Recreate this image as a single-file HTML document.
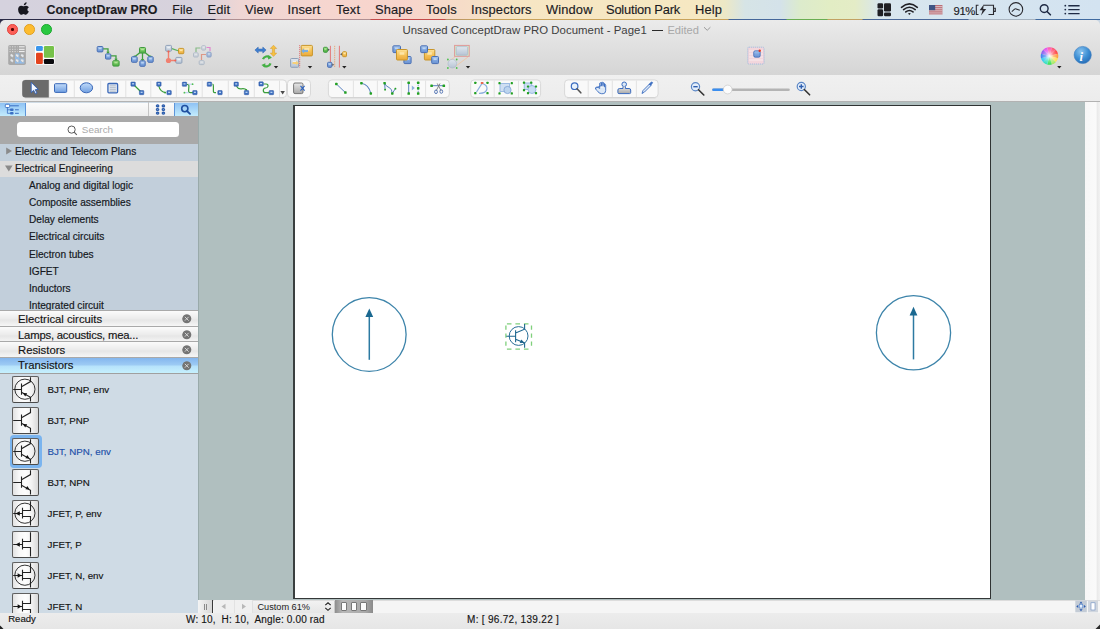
<!DOCTYPE html>
<html><head><meta charset="utf-8">
<style>
*{box-sizing:border-box;margin:0;padding:0}
html,body{width:1100px;height:629px;overflow:hidden;background:#ececec;font-family:"Liberation Sans",sans-serif;color:#1e1e1e}
.a{position:absolute}
.t{position:absolute;white-space:nowrap;line-height:1}
#menubar{left:0;top:0;width:1100px;height:19px;background:linear-gradient(to right,#d5d2de 0px,#d7d2dc 200px,#efd6d4 240px,#f6d6cf 330px,#f8d4cc 400px,#f6dcc8 460px,#f6e6c4 520px,#f6e8c2 700px,#ece8c6 725px,#d6e4e6 745px,#d4e2ea 780px,#dcebcc 800px,#e2edc4 830px,#e4ecc6 855px,#d8e6ee 880px,#d3e3f1 1100px)}
#menuline{left:0;top:19px;width:1100px;height:1px;background:linear-gradient(to right,#2a2a46 0,#2a2a46 215px,#b08f92 216px,#b08f92 370px,#c44a4a 371px,#c44a4a 445px,#b69068 446px,#c9a35a 480px,#c9a35a 728px,#45679a 729px,#45679a 786px,#6aae52 787px,#6aae52 827px,#c2a262 828px,#c2a262 862px,#4a6898 863px,#4a6898 968px,#a8b4c0 969px,#a8b4c0 1035px,#3f6aa0 1036px)}
.mi{position:absolute;top:2.6px;font-size:12.9px;line-height:14px;color:#1b1b1f;letter-spacing:0.12px;-webkit-text-stroke:0.15px #1b1b1f}
#win{left:0;top:20px;width:1100px;height:55px;background:linear-gradient(#ebebeb,#e4e4e4 30%,#d5d5d5);border-radius:5px 5px 0 0}
#tb2{left:0;top:75px;width:1100px;height:26px;background:linear-gradient(#f0f0f0,#ececec)}
#tb2line{left:0;top:101px;width:1100px;height:1.6px;background:#b2b2b2}
#panel{left:0;top:102px;width:198px;height:511px;background:#cfdbe5}
#canvas{left:198px;top:102px;width:887px;height:498px;background:#b0bfbf;border-left:1px solid #9aa}
#page{left:293px;top:105px;width:698px;height:493.6px;background:#fff;border:1.5px solid #2f3333;border-left:2px solid #3a3f3f;border-bottom:1.8px solid #343838}
#vscroll{left:1085px;top:102px;width:15px;height:498px;background:linear-gradient(to right,#f7f7f7,#fafafa 75%,#e9e9e9 80%,#f2f2f2)}
#hbar{left:198px;top:600px;width:902px;height:13px;background:#f5f5f5;border-top:1px solid #dcdcdc}
#status{left:0;top:613px;width:1100px;height:16px;background:linear-gradient(#ececec,#e6e6e6)}
.st{position:absolute;top:616px;font-size:9.4px;line-height:10px;color:#151515;-webkit-text-stroke:0.15px #151515}
.tree{position:absolute;font-size:10.12px;line-height:11px;color:#15181d;-webkit-text-stroke:0.18px #15181d}
.hdr{position:absolute;left:0;width:198px;height:16px;border-top:1px solid #a9a9a9;background:linear-gradient(#fbfbfb,#ececec 50%,#e6e6e6 60%,#f6f6f6)}
.hdr span{position:absolute;left:18px;top:1.6px;font-size:11.3px;line-height:12px;color:#141414;-webkit-text-stroke:0.15px #141414}
.xb{position:absolute;left:182px;top:3px;width:9.5px;height:9.5px;border-radius:50%;background:#767676}
.item{position:absolute;left:11.6px;width:27.2px;height:26.8px;border:1.2px solid #606060;border-bottom:1.8px solid #4a4a4a;border-right:1.5px solid #555;border-radius:2px;background:linear-gradient(to right,#e2e2e2,#f8f8f8 25%,#fdfdfd 50%,#f2f2f2 75%,#d8d8d8)}
.il{position:absolute;left:47.6px;font-size:9.75px;line-height:10px;color:#111;-webkit-text-stroke:0.15px currentColor}
</style></head><body>
<div class="a" id="menubar"></div>
<div class="a" id="menuline"></div>
<div class="mi" style="left:46.5px;font-weight:bold;font-size:12.4px;letter-spacing:0.05px;top:3px">ConceptDraw PRO</div>
<div class="mi" style="left:172.3px;font-size:12.4px">File</div>
<div class="mi" style="left:207.5px">Edit</div>
<div class="mi" style="left:245px">View</div>
<div class="mi" style="left:287.5px">Insert</div>
<div class="mi" style="left:336px">Text</div>
<div class="mi" style="left:375px">Shape</div>
<div class="mi" style="left:426px">Tools</div>
<div class="mi" style="left:471px">Inspectors</div>
<div class="mi" style="left:546px">Window</div>
<div class="mi" style="left:606px;letter-spacing:-0.2px">Solution Park</div>
<div class="mi" style="left:695px">Help</div>
<div class="mi" style="left:953.5px;font-size:11.3px;letter-spacing:-0.4px;top:3.5px">91%</div>

<div class="a" style="left:0;top:19px;width:6px;height:6px;background:#2a2a46"></div><div class="a" style="left:1094px;top:20px;width:6px;height:6px;background:#c8d6e4"></div><div class="a" id="win"></div>
<div class="a" id="tb2"></div>
<div class="a" id="tb2line"></div>

<!-- apple + traffic lights -->
<svg class="a" style="left:17.3px;top:0.9px" width="14" height="15" viewBox="0 0 14 15"><path d="M9.6 1.2Q9.7 2.6 8.8 3.5 7.9 4.4 6.8 4.3 6.7 3.1 7.6 2.2 8.5 1.3 9.6 1.2zM11.9 10.2Q11.4 11.5 10.6 12.6 9.8 13.7 8.9 13.7 8.3 13.7 7.7 13.4 7.1 13.1 6.5 13.1 5.9 13.1 5.3 13.4 4.7 13.7 4.2 13.7 3.3 13.7 2.4 12.4 1.1 10.5 1.1 8.4 1.1 6.7 2 5.7 2.9 4.7 4.2 4.7 4.8 4.7 5.5 5 6.1 5.3 6.6 5.3 7 5.3 7.7 5 8.5 4.7 9.1 4.7 10.9 4.7 11.9 6.2 10.4 7.1 10.4 8.4 10.4 9.6 11.2 10.3z" fill="#17171f"/></svg>
<div class="a" style="left:7.2px;top:24.3px;width:10.4px;height:10.4px;border-radius:50%;background:#fd5f57;border:0.6px solid #e2463f"></div>
<div class="a" style="left:11.1px;top:28.2px;width:2.6px;height:2.6px;border-radius:50%;background:#4d0000"></div>
<div class="a" style="left:24.3px;top:24.3px;width:10.4px;height:10.4px;border-radius:50%;background:#fdbc2e;border:0.6px solid #e0a023"></div>
<div class="a" style="left:41.3px;top:24.3px;width:10.4px;height:10.4px;border-radius:50%;background:#29c840;border:0.6px solid #1eaa30"></div>
<!-- right menu icons -->
<svg class="a" style="left:870px;top:0" width="230" height="19" viewBox="870 0 230 19">
<rect x="877.5" y="3.2" width="5.6" height="5.2" rx="1.2" fill="#1f1f24"/><rect x="877.5" y="9.3" width="5.6" height="7" rx="1.2" fill="#1f1f24"/><rect x="884" y="3.2" width="7" height="8.3" rx="1.2" fill="#1f1f24"/><rect x="884" y="12.4" width="7" height="3.9" rx="1.2" fill="#1f1f24"/>
<path d="M901.5 7.3Q909.4 0.6 917.3 7.3M903.6 9.6Q909.4 4.9 915.2 9.6M905.8 11.9Q909.4 9.2 913 11.9" fill="none" stroke="#1f1f24" stroke-width="1.6" stroke-linecap="round"/><path d="M908 13.6L909.4 15 910.8 13.6Q909.4 12.6 908 13.6z" fill="#1f1f24"/>
<rect x="929" y="5" width="13.4" height="9.6" fill="#b8636b"/><path d="M929 6.4h13.4M929 8.3h13.4M929 10.2h13.4M929 12.1h13.4M929 14h13.4" stroke="#e8e4e8" stroke-width="0.75"/><rect x="929" y="5" width="6.2" height="5.2" fill="#3f5484"/>
<path d="M978.5 5.2H976.3V14.5H978.5M983.5 5.2H993.5V14.5H988.5M993.5 8.3H995.3V11.4H993.5" fill="none" stroke="#2a2a30" stroke-width="1.1"/><path d="M983.8 4.6L979.6 10.3H982.6L981 15.4 986.2 9H983.2z" fill="#2a2a30"/>
<circle cx="1015.9" cy="9.4" r="6.8" fill="none" stroke="#2a2a30" stroke-width="1.1"/><path d="M1011.8 11.6L1014.6 9.2Q1015.3 8.6 1016.2 8.9L1019.8 10.2" fill="none" stroke="#2a2a30" stroke-width="1.1"/>
<circle cx="1044.2" cy="8.6" r="3.9" fill="none" stroke="#1f2a44" stroke-width="1.4"/><path d="M1047 11.5L1050.4 14.8" stroke="#1f2a44" stroke-width="1.6" stroke-linecap="round"/>
<path d="M1068.3 5.7H1079.6M1068.3 9.6H1079.6M1068.3 13.6H1079.6" stroke="#1f2a44" stroke-width="1.4"/><circle cx="1065.3" cy="5.7" r="0.9" fill="#1f2a44"/><circle cx="1065.3" cy="9.6" r="0.9" fill="#1f2a44"/><circle cx="1065.3" cy="13.6" r="0.9" fill="#1f2a44"/>
</svg>
<!--TB1--><svg class="a" style="left:0;top:0" width="1100" height="102" viewBox="0 0 1100 102"><defs>
<linearGradient id="gb" x1="0" y1="0" x2="0" y2="1"><stop offset="0" stop-color="#a9c9f0"/><stop offset="0.5" stop-color="#7ea6e0"/><stop offset="1" stop-color="#6b93d2"/></linearGradient>
<linearGradient id="gg" x1="0" y1="0" x2="0" y2="1"><stop offset="0" stop-color="#a6e28a"/><stop offset="0.5" stop-color="#6cc35a"/><stop offset="1" stop-color="#4eae44"/></linearGradient>
<linearGradient id="gy" x1="0" y1="0" x2="0" y2="1"><stop offset="0" stop-color="#fde29a"/><stop offset="0.5" stop-color="#f6c45a"/><stop offset="1" stop-color="#eaa83a"/></linearGradient>
<linearGradient id="ggr" x1="0" y1="0" x2="0" y2="1"><stop offset="0" stop-color="#dfe6ee"/><stop offset="1" stop-color="#b7c4d4"/></linearGradient>
<radialGradient id="gi" cx="0.4" cy="0.3" r="0.7"><stop offset="0" stop-color="#8cc4ee"/><stop offset="0.6" stop-color="#3d8fd4"/><stop offset="1" stop-color="#2a6fb8"/></radialGradient>
</defs><defs><radialGradient id="gw"><stop offset="0" stop-color="#fff" stop-opacity="0.95"/><stop offset="0.5" stop-color="#fff" stop-opacity="0.35"/><stop offset="1" stop-color="#fff" stop-opacity="0"/></radialGradient></defs><rect x="8.2" y="45" width="17.7" height="20" rx="1.8" fill="#a9a9a9"/><path d="M9.5 46.8h8" stroke="#e8e8e8" stroke-width="0.8" stroke-dasharray="1.2 1.3"/><path d="M19 46.8h5.6" stroke="#f4f4f4" stroke-width="1"/><path d="M9.5 49.3h8" stroke="#e8e8e8" stroke-width="0.8" stroke-dasharray="1.2 1.3"/><path d="M19 49.3h5.6" stroke="#f4f4f4" stroke-width="1"/><path d="M9.5 51.6h8" stroke="#e8e8e8" stroke-width="0.8" stroke-dasharray="1.2 1.3"/><path d="M19 51.6h5.6" stroke="#f4f4f4" stroke-width="1"/><rect x="15.1" y="53.5" width="4.2" height="10" fill="#8fbef0"/><rect x="19.3" y="58.5" width="5" height="5" fill="#8fbef0"/><ellipse cx="11.8" cy="55.6" rx="2" ry="1.4" fill="#e4e8ec" stroke="#9a9a9a" stroke-width="0.4" transform="rotate(45 11.8 55.6)"/><ellipse cx="11.8" cy="60.6" rx="2" ry="1.4" fill="#e4e8ec" stroke="#9a9a9a" stroke-width="0.4" transform="rotate(45 11.8 60.6)"/><ellipse cx="17.2" cy="55.6" rx="2" ry="1.4" fill="#e4e8ec" stroke="#9a9a9a" stroke-width="0.4" transform="rotate(45 17.2 55.6)"/><ellipse cx="17.2" cy="60.6" rx="2" ry="1.4" fill="#e4e8ec" stroke="#9a9a9a" stroke-width="0.4" transform="rotate(45 17.2 60.6)"/><ellipse cx="22.3" cy="55.6" rx="2" ry="1.4" fill="#e4e8ec" stroke="#9a9a9a" stroke-width="0.4" transform="rotate(45 22.3 55.6)"/><ellipse cx="22.3" cy="60.6" rx="2" ry="1.4" fill="#e4e8ec" stroke="#9a9a9a" stroke-width="0.4" transform="rotate(45 22.3 60.6)"/><rect x="35" y="45.2" width="19.6" height="19.6" rx="2.5" fill="#fff"/><rect x="36" y="46" width="6.8" height="4.9" rx="1.2" fill="#3a96ec"/><rect x="36" y="52.8" width="6.8" height="11.2" rx="1.2" fill="#e4441e"/><rect x="43.9" y="46" width="10.1" height="11.7" rx="1.2" fill="#76c24a"/><rect x="43.9" y="59.1" width="10.1" height="4.9" rx="1.2" fill="#0b0b0e"/><path d="M103 48.8H108V52.5M111 55.8H116V59.5" fill="none" stroke="#3f9e3f" stroke-width="1.3"/><path d="M106.2 51.8h3.6L108 54z M114.2 58.8h3.6L116 61z" fill="#3f9e3f"/><g opacity="1"><rect x="97.20" y="46.50" width="5.70" height="5.40" rx="0.9" fill="url(#gb)" stroke="#4a70b4" stroke-width="1"/><rect x="98.71" y="47.79" width="2.68" height="1.41" fill="#d4e6fa" opacity="0.7"/></g><g opacity="1"><rect x="105.50" y="53.90" width="5.30" height="5.20" rx="0.9" fill="url(#gb)" stroke="#4a70b4" stroke-width="1"/><rect x="106.89" y="55.14" width="2.52" height="1.36" fill="#d4e6fa" opacity="0.7"/></g><g opacity="1"><rect x="112.80" y="60.70" width="6.30" height="5.40" rx="0.9" fill="url(#gg)" stroke="#3f9a3f" stroke-width="1"/><rect x="114.49" y="61.99" width="2.92" height="1.41" fill="#c8f0b0" opacity="0.7"/></g><path d="M142.5 53V60M140 52.5L134.5 57M145 52.5L150.5 57" fill="none" stroke="#3f9e3f" stroke-width="1.3"/><path d="M140.7 59h3.6l-1.8 2.2z" fill="#3f9e3f"/><circle cx="134.6" cy="56.6" r="1.2" fill="#3f9e3f"/><circle cx="150.4" cy="56.6" r="1.2" fill="#3f9e3f"/><g opacity="1"><rect x="139.50" y="47.50" width="6.00" height="5.60" rx="0.9" fill="url(#gg)" stroke="#3f9a3f" stroke-width="1"/><rect x="141.10" y="48.85" width="2.80" height="1.45" fill="#c8f0b0" opacity="0.7"/></g><g opacity="1"><rect x="131.50" y="56.70" width="5.70" height="5.60" rx="0.9" fill="url(#gb)" stroke="#4a70b4" stroke-width="1"/><rect x="133.01" y="58.05" width="2.68" height="1.45" fill="#d4e6fa" opacity="0.7"/></g><g opacity="1"><rect x="139.80" y="60.80" width="5.40" height="5.50" rx="0.9" fill="url(#gb)" stroke="#4a70b4" stroke-width="1"/><rect x="141.22" y="62.12" width="2.56" height="1.43" fill="#d4e6fa" opacity="0.7"/></g><g opacity="1"><rect x="147.80" y="56.70" width="5.40" height="5.60" rx="0.9" fill="url(#gb)" stroke="#4a70b4" stroke-width="1"/><rect x="149.22" y="58.05" width="2.56" height="1.45" fill="#d4e6fa" opacity="0.7"/></g><path d="M172 48.6L178 50.8" stroke="#5bb05b" stroke-width="1.2"/><path d="M168.5 51.5V59M168.5 60.5H175.5" stroke="#f08070" stroke-width="1.4" fill="none"/><g opacity="1"><rect x="165.70" y="45.40" width="5.80" height="5.80" rx="0.9" fill="url(#ggr)" stroke="#8ea0b8" stroke-width="1"/><rect x="167.24" y="46.80" width="2.72" height="1.50" fill="#f4f7fa" opacity="0.7"/></g><g opacity="1"><rect x="178.50" y="48.40" width="5.30" height="5.30" rx="0.9" fill="url(#gy)" stroke="#c8952a" stroke-width="1"/><rect x="179.89" y="49.66" width="2.52" height="1.39" fill="#fff0c0" opacity="0.7"/></g><g opacity="1"><rect x="175.80" y="57.40" width="6.10" height="5.80" rx="0.9" fill="url(#ggr)" stroke="#8ea0b8" stroke-width="1"/><rect x="177.43" y="58.80" width="2.84" height="1.50" fill="#f4f7fa" opacity="0.7"/></g><circle cx="168.5" cy="60.5" r="2.6" fill="#f08070"/><circle cx="168.5" cy="51.6" r="1.1" fill="#f06050"/><circle cx="175.3" cy="60.5" r="1" fill="#f06050"/><g opacity="0.55"><path d="M196 52V48H200.5" stroke="#3f9e3f" stroke-width="1.2" fill="none"/><path d="M206.5 47.5H210V51" stroke="#e040c0" stroke-width="1.2" fill="none"/><path d="M206 54.5H201.5V60" stroke="#e06040" stroke-width="1.2" fill="none"/><g opacity="1"><rect x="201.70" y="45.70" width="3.90" height="4.40" rx="0.9" fill="url(#ggr)" stroke="#8ea0b8" stroke-width="1"/><rect x="202.67" y="46.71" width="1.96" height="1.19" fill="#f4f7fa" opacity="0.7"/></g><g opacity="1"><rect x="193.50" y="52.80" width="4.70" height="4.20" rx="0.9" fill="url(#ggr)" stroke="#8ea0b8" stroke-width="1"/><rect x="194.71" y="53.76" width="2.28" height="1.14" fill="#f4f7fa" opacity="0.7"/></g><g opacity="1"><rect x="206.90" y="52.20" width="4.20" height="4.80" rx="0.9" fill="url(#gb)" stroke="#4a70b4" stroke-width="1"/><rect x="207.96" y="53.32" width="2.08" height="1.28" fill="#d4e6fa" opacity="0.7"/></g><g opacity="1"><rect x="199.20" y="60.70" width="5.00" height="3.90" rx="0.9" fill="url(#ggr)" stroke="#8ea0b8" stroke-width="1"/><rect x="200.50" y="61.57" width="2.40" height="1.08" fill="#f4f7fa" opacity="0.7"/></g></g><path d="M254.9 50.1L258.2 47.1V49H262.8V47.1L266.1 50.1 262.8 53.1V51.2H258.2V53.1z" fill="#3f7fcf" stroke="#2d63b0" stroke-width="0.5"/><path d="M273.5 45.2L276.7 48.5H274.6V53.1H276.7L273.5 56.4 270.3 53.1H272.4V48.5H270.3z" fill="#f6c142" stroke="#d4982a" stroke-width="0.5"/><path d="M263 59.2A4.3 4.3 0 0 1 270 57.5M270.5 63.4A4.3 4.3 0 0 1 263.4 65.2" fill="none" stroke="#44b044" stroke-width="2.2"/><path d="M268.3 55.3L272 57.8 268 59.4z M265.2 67.5L261.4 65 265.4 63.3z" fill="#44b044"/><path d="M273.8 66.1H278.2L276 68.6z" fill="#222"/><g opacity="1"><rect x="301.20" y="45.40" width="11.20" height="10.50" rx="0.9" fill="url(#gy)" stroke="#c8952a" stroke-width="1"/><rect x="304.36" y="48.12" width="4.88" height="2.53" fill="#fff0c0" opacity="0.7"/></g><path d="M302 51H308" stroke="#7aaee0" stroke-width="2.2"/><path d="M301.2 51L304 48.6V53.4z" fill="#7aaee0"/><g opacity="1"><rect x="290.60" y="58.50" width="8.00" height="8.80" rx="0.9" fill="url(#ggr)" stroke="#8ea0b8" stroke-width="1"/><rect x="292.80" y="60.74" width="3.60" height="2.16" fill="#f4f7fa" opacity="0.7"/></g><path d="M292.5 63H297" stroke="#f6d07a" stroke-width="2"/><path d="M299 63L296.2 60.8V65.2z" fill="#f6d07a"/><path d="M299.7 45V67.5" stroke="#e06a6a" stroke-width="0.9" stroke-dasharray="1.2 0.8"/><path d="M307.8 66.1H312.2L310 68.6z" fill="#222"/><path d="M330.4 45.8V67.6M339.4 45.8V67.6" stroke="#e47878" stroke-width="1"/><path d="M334.7 45.8V67.6" stroke="#e8a878" stroke-width="1" stroke-dasharray="1.4 0.8"/><g opacity="1"><rect x="323.50" y="47.30" width="3.90" height="5.00" rx="0.9" fill="url(#gg)" stroke="#3f9a3f" stroke-width="1"/><rect x="324.47" y="48.48" width="1.96" height="1.32" fill="#c8f0b0" opacity="0.7"/></g><g opacity="1"><rect x="327.60" y="62.30" width="4.20" height="5.00" rx="0.9" fill="url(#gb)" stroke="#4a70b4" stroke-width="1"/><rect x="328.66" y="63.48" width="2.08" height="1.32" fill="#d4e6fa" opacity="0.7"/></g><g opacity="1"><rect x="342.60" y="51.70" width="3.90" height="5.00" rx="0.9" fill="url(#gy)" stroke="#c8952a" stroke-width="1"/><rect x="343.57" y="52.88" width="1.96" height="1.32" fill="#fff0c0" opacity="0.7"/></g><path d="M328 48.5l1.8 1.3-1.8 1.3z M332.3 63.5l1.8 1.3-1.8 1.3z M341.9 52.9l-1.8 1.3 1.8 1.3z" fill="#555"/><path d="M342.1 66.1H346.5L344.3 68.6z" fill="#222"/><g opacity="1"><rect x="392.90" y="45.80" width="7.60" height="6.80" rx="0.9" fill="url(#gb)" stroke="#4a70b4" stroke-width="1"/><rect x="394.98" y="47.48" width="3.44" height="1.72" fill="#d4e6fa" opacity="0.7"/></g><g opacity="1"><rect x="403.90" y="56.50" width="7.20" height="7.10" rx="0.9" fill="url(#gb)" stroke="#4a70b4" stroke-width="1"/><rect x="405.86" y="58.27" width="3.28" height="1.78" fill="#d4e6fa" opacity="0.7"/></g><g opacity="1"><rect x="396.50" y="49.50" width="10.90" height="10.50" rx="0.9" fill="url(#gy)" stroke="#c8952a" stroke-width="1"/><rect x="399.57" y="52.22" width="4.76" height="2.53" fill="#fff0c0" opacity="0.7"/></g><g opacity="1"><rect x="424.40" y="49.50" width="10.40" height="10.50" rx="0.9" fill="url(#gy)" stroke="#c8952a" stroke-width="1"/><rect x="427.32" y="52.22" width="4.56" height="2.53" fill="#fff0c0" opacity="0.7"/></g><g opacity="1"><rect x="420.70" y="45.80" width="6.80" height="6.80" rx="0.9" fill="url(#gb)" stroke="#4a70b4" stroke-width="1"/><rect x="422.54" y="47.48" width="3.12" height="1.72" fill="#d4e6fa" opacity="0.7"/></g><g opacity="1"><rect x="431.70" y="56.50" width="6.80" height="7.10" rx="0.9" fill="url(#gb)" stroke="#4a70b4" stroke-width="1"/><rect x="433.54" y="58.27" width="3.12" height="1.78" fill="#d4e6fa" opacity="0.7"/></g><path d="M455 57L449 61M468 57L456 66" stroke="#f2c6a0" stroke-width="1" opacity="0.8"/><rect x="454.6" y="45.4" width="14.6" height="10.9" fill="#cfe8c8" stroke="#e09898" stroke-width="1"/><rect x="456.3" y="46.6" width="11.2" height="8.6" rx="1" fill="url(#ggr)" stroke="#a4b6cc" stroke-width="0.6"/><circle cx="452.3" cy="63.7" r="4.3" fill="url(#ggr)" stroke="#a8b6c8" stroke-width="0.6"/><circle cx="447.9" cy="59.5" r="0.9" fill="#4cc04c"/><circle cx="456.7" cy="59.5" r="0.9" fill="#4cc04c"/><circle cx="447.9" cy="68" r="0.9" fill="#4cc04c"/><circle cx="456.7" cy="68" r="0.9" fill="#4cc04c"/><path d="M465.8 66.1H470.2L468 68.6z" fill="#222"/><rect x="747.8" y="47.2" width="16.2" height="16.8" rx="1" fill="#f2d6dc" stroke="#8fb2e0" stroke-width="0.9" stroke-dasharray="1 1"/><path d="M749 51h14M749 54h14M749 57h14M749 60h14" stroke="#fff" stroke-width="0.8" opacity="0.7"/><rect x="753.7" y="50.8" width="6.5" height="6.4" rx="1.5" fill="url(#gb)" stroke="#3460b0" stroke-width="0.7"/><circle cx="759.7" cy="50.7" r="1.2" fill="#e8341c"/><path d="M1049.5 56L1055.72 49.78A8.8 8.8 0 0 1 1058.00 53.72z" fill="#ff4040"/><path d="M1049.5 56L1058.00 53.72A8.8 8.8 0 0 1 1058.00 58.28z" fill="#ff9a3a"/><path d="M1049.5 56L1058.00 58.28A8.8 8.8 0 0 1 1055.72 62.22z" fill="#ffe050"/><path d="M1049.5 56L1055.72 62.22A8.8 8.8 0 0 1 1051.78 64.50z" fill="#a8e860"/><path d="M1049.5 56L1051.78 64.50A8.8 8.8 0 0 1 1047.22 64.50z" fill="#30e050"/><path d="M1049.5 56L1047.22 64.50A8.8 8.8 0 0 1 1043.28 62.22z" fill="#30e0c0"/><path d="M1049.5 56L1043.28 62.22A8.8 8.8 0 0 1 1041.00 58.28z" fill="#30c8f0"/><path d="M1049.5 56L1041.00 58.28A8.8 8.8 0 0 1 1041.00 53.72z" fill="#3a80f0"/><path d="M1049.5 56L1041.00 53.72A8.8 8.8 0 0 1 1043.28 49.78z" fill="#8a5af0"/><path d="M1049.5 56L1043.28 49.78A8.8 8.8 0 0 1 1047.22 47.50z" fill="#e050f0"/><path d="M1049.5 56L1047.22 47.50A8.8 8.8 0 0 1 1051.78 47.50z" fill="#ff50b0"/><path d="M1049.5 56L1051.78 47.50A8.8 8.8 0 0 1 1055.72 49.78z" fill="#ff5070"/><circle cx="1049.5" cy="56" r="8.8" fill="url(#gw)"/><path d="M1057.1 66.1H1061.5L1059.3 68.6z" fill="#222"/><circle cx="1082.7" cy="55" r="8.6" fill="url(#gi)" stroke="#3a7cc0" stroke-width="0.6"/><text x="1081.2" y="60.8" font-family="Liberation Serif" font-style="italic" font-weight="bold" font-size="12.5" fill="#fff" text-anchor="middle">i</text></svg><!--/TB1-->
<!--TB2--><svg class="a" style="left:0;top:0" width="1100" height="102" viewBox="0 0 1100 102"><defs><linearGradient id="hb" x1="0" y1="0" x2="0" y2="1"><stop offset="0" stop-color="#c2dcfa"/><stop offset="1" stop-color="#6f9ee0"/></linearGradient><linearGradient id="hc" x1="0" y1="0" x2="0" y2="1"><stop offset="0" stop-color="#eef4fb"/><stop offset="1" stop-color="#aac6e6"/></linearGradient><linearGradient id="hd" x1="0" y1="0" x2="0" y2="1"><stop offset="0" stop-color="#e8e8e8"/><stop offset="1" stop-color="#a8a8a8"/></linearGradient></defs><rect x="22.5" y="79.9" width="264" height="17.6" rx="3.5" fill="#f9f9f9" stroke="#d9d9d9" stroke-width="1"/><path d="M25 97.9H284" stroke="#cfcfcf" stroke-width="0.8"/><path d="M49 80.5V97" stroke="#e2e2e2" stroke-width="1"/><path d="M74.3 80.5V97" stroke="#e2e2e2" stroke-width="1"/><path d="M100.7 80.5V97" stroke="#e2e2e2" stroke-width="1"/><path d="M125.8 80.5V97" stroke="#e2e2e2" stroke-width="1"/><path d="M150.8 80.5V97" stroke="#e2e2e2" stroke-width="1"/><path d="M176.4 80.5V97" stroke="#e2e2e2" stroke-width="1"/><path d="M202.2 80.5V97" stroke="#e2e2e2" stroke-width="1"/><path d="M228.3 80.5V97" stroke="#e2e2e2" stroke-width="1"/><path d="M254.3 80.5V97" stroke="#e2e2e2" stroke-width="1"/><path d="M279.5 80.5V97" stroke="#e2e2e2" stroke-width="1"/><path d="M22.2 83.2A3.3 3.3 0 0 1 25.5 79.9H48.8V97.5H25.5A3.3 3.3 0 0 1 22.2 94.2z" fill="#6b6b6b"/><path d="M31.2 82.3L31.2 92.6 33.6 90.3 35.5 93.8 37 93 35.2 89.7 38.3 89.4z" fill="#f4f8ff" stroke="#2c5fb8" stroke-width="0.9" stroke-linejoin="round"/><rect x="54.5" y="83.7" width="12.2" height="8.7" rx="1" fill="url(#hb)" stroke="#3a68b8" stroke-width="1"/><ellipse cx="86.4" cy="87.8" rx="6.2" ry="5" fill="url(#hb)" stroke="#3a68b8" stroke-width="1"/><rect x="107.9" y="83.5" width="9.7" height="9.3" rx="1" fill="#dfe6f0" stroke="#3a68b8" stroke-width="1.3"/><path d="M109.8 85.8h6M109.8 87.6h6M109.8 89.4h6M109.8 91.2h6" stroke="#9aa6b4" stroke-width="0.6"/><path d="M134.5 85.5L140.6 91.5" stroke="#3b9e3b" stroke-width="1.2"/><rect x="130.9" y="82.0" width="4.4" height="4.2" rx="0.6" fill="#3d6fc0" stroke="#2a55a0" stroke-width="0.5"/><rect x="132.1" y="83.19999999999999" width="2" height="1.2" fill="#c8dcf6"/><rect x="139.4" y="90.5" width="4.4" height="4.2" rx="0.6" fill="#3d6fc0" stroke="#2a55a0" stroke-width="0.5"/><rect x="140.6" y="91.69999999999999" width="2" height="1.2" fill="#c8dcf6"/><path d="M158.8 86Q160 92 166 92.6" fill="none" stroke="#3b9e3b" stroke-width="1.2"/><circle cx="165" cy="92.6" r="0.9" fill="#3b9e3b"/><rect x="156.70000000000002" y="82.0" width="4.4" height="4.2" rx="0.6" fill="#3d6fc0" stroke="#2a55a0" stroke-width="0.5"/><rect x="157.9" y="83.19999999999999" width="2" height="1.2" fill="#c8dcf6"/><rect x="166.9" y="90.5" width="4.4" height="4.2" rx="0.6" fill="#3d6fc0" stroke="#2a55a0" stroke-width="0.5"/><rect x="168.1" y="91.69999999999999" width="2" height="1.2" fill="#c8dcf6"/><path d="M186.5 84.5H187.8Q189 84.5 188.9 86.5L188.6 90.5Q188.5 92.6 190.5 92.6H193" fill="none" stroke="#3b9e3b" stroke-width="1.2"/><path d="M188 84.2h4.5M184.7 92.7H189" stroke="#9bbce8" stroke-width="0.7"/><circle cx="192.6" cy="84.2" r="0.9" fill="#52c052"/><circle cx="184.4" cy="92.7" r="0.9" fill="#52c052"/><rect x="182.3" y="82.10000000000001" width="4.4" height="4.2" rx="0.6" fill="#3d6fc0" stroke="#2a55a0" stroke-width="0.5"/><rect x="183.5" y="83.3" width="2" height="1.2" fill="#c8dcf6"/><rect x="192.70000000000002" y="90.5" width="4.4" height="4.2" rx="0.6" fill="#3d6fc0" stroke="#2a55a0" stroke-width="0.5"/><rect x="193.9" y="91.69999999999999" width="2" height="1.2" fill="#c8dcf6"/><path d="M212.5 84.2Q213.4 84.4 213.4 86V91.6Q213.4 92.6 214.6 92.6H216" fill="none" stroke="#3b9e3b" stroke-width="1.2"/><rect x="207.20000000000002" y="82.10000000000001" width="4.4" height="4.2" rx="0.6" fill="#3d6fc0" stroke="#2a55a0" stroke-width="0.5"/><rect x="208.4" y="83.3" width="2" height="1.2" fill="#c8dcf6"/><rect x="217.8" y="90.5" width="4.4" height="4.2" rx="0.6" fill="#3d6fc0" stroke="#2a55a0" stroke-width="0.5"/><rect x="219" y="91.69999999999999" width="2" height="1.2" fill="#c8dcf6"/><path d="M236.5 86.3Q238 89.3 241.5 88.8Q245 88.3 246.5 90" fill="none" stroke="#3b9e3b" stroke-width="1.2"/><circle cx="246.3" cy="89.8" r="0.9" fill="#3b9e3b"/><rect x="234.0" y="82.10000000000001" width="4.4" height="4.2" rx="0.6" fill="#3d6fc0" stroke="#2a55a0" stroke-width="0.5"/><rect x="235.2" y="83.3" width="2" height="1.2" fill="#c8dcf6"/><rect x="244.3" y="90.5" width="4.4" height="4.2" rx="0.6" fill="#3d6fc0" stroke="#2a55a0" stroke-width="0.5"/><rect x="245.5" y="91.69999999999999" width="2" height="1.2" fill="#c8dcf6"/><path d="M263.3 84H266.2Q268.2 84 268 86.2Q267.8 87.8 265.5 88Q263.3 88.3 263.3 90.4Q263.3 92.6 265.5 92.6H268.7" fill="none" stroke="#3b9e3b" stroke-width="1.2"/><circle cx="268.3" cy="92.6" r="0.9" fill="#3b9e3b"/><rect x="258.90000000000003" y="81.80000000000001" width="4.4" height="4.2" rx="0.6" fill="#3d6fc0" stroke="#2a55a0" stroke-width="0.5"/><rect x="260.1" y="83.0" width="2" height="1.2" fill="#c8dcf6"/><rect x="269.2" y="90.5" width="4.4" height="4.2" rx="0.6" fill="#3d6fc0" stroke="#2a55a0" stroke-width="0.5"/><rect x="270.4" y="91.69999999999999" width="2" height="1.2" fill="#c8dcf6"/><path d="M280.4 91.1H284.9L282.65 94.6z" fill="#4a4a4a"/><rect x="287.5" y="79.9" width="23" height="17.6" rx="3.5" fill="#f9f9f9" stroke="#d9d9d9" stroke-width="1"/><path d="M290 97.9H308" stroke="#cfcfcf" stroke-width="0.8"/><rect x="293.6" y="83" width="9.4" height="10.6" rx="1.4" fill="url(#hd)" stroke="#6a6a6a" stroke-width="0.9"/><path d="M300.5 85.8L304.6 90.6M304.6 85.8L300.5 90.6" stroke="#2a62c0" stroke-width="1.1"/><rect x="328.4" y="79.9" width="120.90000000000003" height="17.6" rx="3.5" fill="#f9f9f9" stroke="#d9d9d9" stroke-width="1"/><path d="M330.9 97.9H446.8" stroke="#cfcfcf" stroke-width="0.8"/><path d="M353.4 80.5V97" stroke="#e2e2e2" stroke-width="1"/><path d="M377.4 80.5V97" stroke="#e2e2e2" stroke-width="1"/><path d="M401.4 80.5V97" stroke="#e2e2e2" stroke-width="1"/><path d="M425.6 80.5V97" stroke="#e2e2e2" stroke-width="1"/><path d="M336.3 83.9L345.4 92.6" stroke="#5a82c0" stroke-width="1"/><rect x="335.05" y="82.65" width="2.5" height="2.5" rx="0.6" fill="#22a022"/><rect x="344.15" y="91.35" width="2.5" height="2.5" rx="0.6" fill="#22a022"/><path d="M361.4 83.2Q368.8 84.5 370.8 93.4" fill="none" stroke="#5a82c0" stroke-width="1.1"/><rect x="360.15" y="81.95" width="2.5" height="2.5" rx="0.6" fill="#22a022"/><rect x="369.55" y="92.15" width="2.5" height="2.5" rx="0.6" fill="#22a022"/><path d="M384.6 83.2Q386 86.5 389 87.5Q392 88.5 392.3 93.4M392.3 93.4L395.4 88.6M384.6 83.2L385.1 89.7" fill="none" stroke="#5a82c0" stroke-width="1"/><rect x="383.35" y="81.95" width="2.5" height="2.5" rx="0.6" fill="#22a022"/><rect x="391.05" y="92.15" width="2.5" height="2.5" rx="0.6" fill="#22a022"/><rect x="384.20000000000005" y="88.8" width="1.8" height="1.8" rx="0.6" fill="#22a022"/><rect x="394.5" y="87.69999999999999" width="1.8" height="1.8" rx="0.6" fill="#22a022"/><path d="M408.7 82.8V93.5" stroke="#5a82c0" stroke-width="1"/><path d="M418.2 82.8V93.5" stroke="#5a82c0" stroke-width="1" stroke-dasharray="1 1"/><path d="M411.8 85.6L414.8 88.1 411.8 90.6z" fill="#8fb0dc"/><rect x="407.45" y="81.55" width="2.5" height="2.5" rx="0.6" fill="#22a022"/><rect x="407.45" y="92.25" width="2.5" height="2.5" rx="0.6" fill="#22a022"/><rect x="416.95" y="81.55" width="2.5" height="2.5" rx="0.6" fill="#22a022"/><rect x="416.95" y="87.05" width="2.5" height="2.5" rx="0.6" fill="#22a022"/><rect x="416.95" y="92.25" width="2.5" height="2.5" rx="0.6" fill="#22a022"/><path d="M432 85.7H443.5" stroke="#5a82c0" stroke-width="1"/><path d="M436 91L440 83.5M441.2 91L437.3 83.5" stroke="#7a7a7a" stroke-width="0.9"/><ellipse cx="436" cy="91.8" rx="1.4" ry="1.8" fill="none" stroke="#5a7ab8" stroke-width="1"/><ellipse cx="441.3" cy="91.5" rx="1.4" ry="1.8" fill="none" stroke="#5a7ab8" stroke-width="1"/><rect x="430.3" y="84.4" width="2.6" height="2.6" rx="0.6" fill="#22a022"/><rect x="442.5" y="84.4" width="2.6" height="2.6" rx="0.6" fill="#22a022"/><rect x="470.7" y="79.9" width="69.90000000000003" height="17.6" rx="3.5" fill="#f9f9f9" stroke="#d9d9d9" stroke-width="1"/><path d="M473.2 97.9H538.1" stroke="#cfcfcf" stroke-width="0.8"/><path d="M494.2 80.5V97" stroke="#e2e2e2" stroke-width="1"/><path d="M518.5 80.5V97" stroke="#e2e2e2" stroke-width="1"/><path d="M476.5 92L482 83.5Q487.5 85 487 89Q486 93.5 479 93.3" fill="none" stroke="#8aaede" stroke-width="1.2"/><rect x="480.8" y="82" width="2.6" height="2" fill="#e86a50"/><rect x="474.15000000000003" y="81.64999999999999" width="2.3" height="2.3" rx="0.6" fill="#22a022"/><rect x="486.35" y="81.64999999999999" width="2.3" height="2.3" rx="0.6" fill="#22a022"/><rect x="474.15000000000003" y="92.05" width="2.3" height="2.3" rx="0.6" fill="#22a022"/><rect x="486.35" y="92.05" width="2.3" height="2.3" rx="0.6" fill="#22a022"/><rect x="500" y="83.4" width="9.5" height="8" fill="#cfdff2" stroke="#8aaede" stroke-width="0.8"/><circle cx="507.5" cy="90" r="3.6" fill="#bcd4ee" stroke="#7ea2d4" stroke-width="0.8"/><rect x="498.4" y="82.10000000000001" width="2.2" height="2.2" rx="0.6" fill="#22a022"/><rect x="510.7" y="82.10000000000001" width="2.2" height="2.2" rx="0.6" fill="#22a022"/><rect x="498.4" y="92.30000000000001" width="2.2" height="2.2" rx="0.6" fill="#22a022"/><rect x="510.7" y="92.30000000000001" width="2.2" height="2.2" rx="0.6" fill="#22a022"/><rect x="524.2" y="83" width="7.5" height="6.5" fill="#cfdff2" stroke="#8aaede" stroke-width="0.8"/><circle cx="532" cy="89.5" r="4" fill="#c8dcf2" stroke="#8aaede" stroke-width="0.8"/><rect x="522.9" y="81.60000000000001" width="2.2" height="2.2" rx="0.6" fill="#22a022"/><rect x="530.1" y="81.60000000000001" width="2.2" height="2.2" rx="0.6" fill="#22a022"/><rect x="522.9" y="89.10000000000001" width="2.2" height="2.2" rx="0.6" fill="#22a022"/><rect x="526.9" y="85.4" width="2.2" height="2.2" rx="0.6" fill="#22a022"/><rect x="534.9" y="85.4" width="2.2" height="2.2" rx="0.6" fill="#22a022"/><rect x="526.9" y="92.10000000000001" width="2.2" height="2.2" rx="0.6" fill="#22a022"/><rect x="534.9" y="92.10000000000001" width="2.2" height="2.2" rx="0.6" fill="#22a022"/><rect x="564.6" y="79.9" width="93.5" height="17.6" rx="3.5" fill="#f9f9f9" stroke="#d9d9d9" stroke-width="1"/><path d="M567.1 97.9H655.6" stroke="#cfcfcf" stroke-width="0.8"/><path d="M588.2 80.5V97" stroke="#e2e2e2" stroke-width="1"/><path d="M612.3 80.5V97" stroke="#e2e2e2" stroke-width="1"/><path d="M636.4 80.5V97" stroke="#e2e2e2" stroke-width="1"/><circle cx="574.6" cy="86.2" r="3.3" fill="#e8f2fc" stroke="#3a6cc0" stroke-width="1.2"/><path d="M577 88.8L580.8 92.8" stroke="#555" stroke-width="1.6" stroke-linecap="round"/><path d="M595 88.5L597.4 90.8Q598.8 93.7 601.5 93.7H603.2Q605.6 93.5 605.7 90.6V85.2Q605.5 83.9 604.5 84.3V87.2M604.5 86V83.5Q604 82.3 603 83V86.5M603 85.5V82.6Q602.2 81.8 601.3 82.5V86.3M601.3 85.5V83Q600.4 82.3 599.7 83.2V88.5L597.8 87.2Q596.5 86.5 595 88.5z" fill="#dce8f6" stroke="#3a6cc0" stroke-width="0.9" stroke-linejoin="round"/><circle cx="624.2" cy="84.3" r="2.3" fill="#dce8f6" stroke="#3a6cc0" stroke-width="1"/><path d="M623 86.5V88.5H619.6Q617.9 88.5 617.9 90V92.6Q617.9 93.6 619 93.6H629.5Q630.7 93.6 630.7 92.6V90Q630.7 88.5 629 88.5H625.4V86.5" fill="url(#hd)" stroke="#3a6cc0" stroke-width="1"/><path d="M642 93.5L643 90.5 649.5 84 651 85.5 644.5 92z" fill="#dce8f6" stroke="#3a6cc0" stroke-width="0.9"/><path d="M648.8 84.5L651.2 82.2Q652.3 81.6 652.6 82.8L650.5 85.5" fill="#3a6cc0" stroke="#3a6cc0" stroke-width="0.8"/><circle cx="695.5" cy="86.7" r="4.1" fill="#e4eefa" stroke="#5a86c6" stroke-width="1.2"/><path d="M693.3 86.7H697.7" stroke="#2f5fb0" stroke-width="1.4"/><path d="M698.5 89.7L703.8 95" stroke="#333" stroke-width="1.6" stroke-linecap="round"/><path d="M713.5 89.7H788.5" stroke="#b4b4b4" stroke-width="2.6" stroke-linecap="round"/><path d="M713.5 89.7H726" stroke="#3a8ef0" stroke-width="2.6" stroke-linecap="round"/><circle cx="727.7" cy="89.5" r="4.4" fill="#fcfcfc" stroke="#c8c8c8" stroke-width="0.7"/><circle cx="801.3" cy="86.5" r="4.1" fill="#e4eefa" stroke="#5a86c6" stroke-width="1.2"/><path d="M799 86.5H803.6M801.3 84.2V88.8" stroke="#2f5fb0" stroke-width="1.4"/><path d="M804.3 89.5L809.6 94.8" stroke="#333" stroke-width="1.6" stroke-linecap="round"/></svg><!--/TB2-->
<div class="t" style="left:402.5px;top:24px;font-size:11.4px;line-height:12px;color:#3e3e3e;letter-spacing:0.03px">Unsaved ConceptDraw PRO Document - Page1</div>
<div class="a" style="left:652px;top:29.6px;width:11.2px;height:1.3px;background:#2a2a2a"></div>
<div class="t" style="left:667.4px;top:24px;font-size:11.1px;line-height:12px;color:#a8a8a8">Edited</div>
<svg class="a" style="left:703px;top:26px" width="9" height="6" viewBox="0 0 9 6"><path d="M1 1.2L4.2 4.3 7.4 1.2" fill="none" stroke="#9a9a9a" stroke-width="1"/></svg>

<div class="a" id="panel"></div>

<!-- panel header -->
<div class="a" style="left:0;top:102.6px;width:198px;height:13.4px;background:linear-gradient(#fbfbfb,#ededed)"></div>
<div class="a" style="left:0;top:102.6px;width:26px;height:13.4px;background:linear-gradient(#8fc2f4,#c3ecfd);border-right:1px solid #5d95d9"></div>
<svg class="a" style="left:0;top:102px" width="26" height="14" viewBox="0 102 26 14">
<rect x="5.3" y="104.3" width="4.3" height="3.2" rx="0.8" fill="#fff" stroke="#3a6fc4" stroke-width="0.9"/>
<path d="M10 105.8H18.8" stroke="#3a6fc4" stroke-width="1"/>
<path d="M7.4 107.6V113.3H10M7.4 109.8H10" stroke="#3a6fc4" stroke-width="0.8" fill="none"/>
<rect x="10" y="108.6" width="3.6" height="2.4" rx="0.9" fill="#3a6fc4"/><rect x="10" y="112.1" width="3.6" height="2.4" rx="0.9" fill="#3a6fc4"/>
<path d="M15 109.8H18.8M15 113.3H18.8" stroke="#3a6fc4" stroke-width="1"/>
</svg>
<div class="a" style="left:148px;top:102px;width:1px;height:14px;background:#c4c4c4"></div>
<svg class="a" style="left:155px;top:104px" width="12" height="11" viewBox="0 0 12 11">
<g fill="none" stroke="#2e5fae" stroke-width="1.4"><rect x="1.5" y="1" width="2.2" height="1.8" rx="0.9"/><rect x="7.3" y="1" width="2.2" height="1.8" rx="0.9"/><rect x="1.5" y="4.6" width="2.2" height="1.8" rx="0.9"/><rect x="7.3" y="4.6" width="2.2" height="1.8" rx="0.9"/><rect x="1.5" y="8.2" width="2.2" height="1.8" rx="0.9"/><rect x="7.3" y="8.2" width="2.2" height="1.8" rx="0.9"/></g></svg>
<div class="a" style="left:174px;top:102.6px;width:24px;height:13.4px;background:linear-gradient(#8fc2f4,#c3ecfd);border-left:1px solid #5d95d9"></div>
<svg class="a" style="left:180px;top:104px" width="12" height="11" viewBox="0 0 12 11"><circle cx="4.8" cy="4.6" r="3.1" fill="none" stroke="#1f4fa0" stroke-width="1.6"/><path d="M7 7l3 2.8" stroke="#1f4fa0" stroke-width="1.8" stroke-linecap="round"/></svg>
<!-- search area -->
<div class="a" style="left:0;top:116px;width:198px;height:28px;background:#a9a9a9"></div>
<div class="a" style="left:17px;top:122px;width:162px;height:15px;background:#fff;border-radius:3.5px"></div>
<svg class="a" style="left:67px;top:124.5px" width="11" height="11" viewBox="0 0 11 11"><circle cx="4.6" cy="4.6" r="3.6" fill="none" stroke="#5a5a5a" stroke-width="1"/><path d="M7.2 7.2l2.6 2.6" stroke="#5a5a5a" stroke-width="1.1"/></svg>
<div class="t" style="left:81.8px;top:124.8px;font-size:9.9px;color:#a9a9a9">Search</div>
<!-- tree -->
<div class="a" style="left:0;top:144px;width:198px;height:167px;background:#c2cfdb"></div>
<div class="a" style="left:0;top:160.8px;width:198px;height:16.4px;background:#dcdcdc"></div>
<svg class="a" style="left:5px;top:146px" width="10" height="10" viewBox="0 0 10 10"><path d="M1.2 1.5L7 5 1.2 8.5z" fill="#8a8a8a"/></svg>
<svg class="a" style="left:4px;top:163px" width="10" height="10" viewBox="0 0 10 10"><path d="M1 2.5h7.6L4.8 8.4z" fill="#8a8a8a"/></svg>
<div class="tree" style="left:15px;top:145.5px">Electric and Telecom Plans</div>
<div class="tree" style="left:15px;top:162.5px">Electrical Engineering</div>
<div class="tree" style="left:29px;top:179.8px">Analog and digital logic</div>
<div class="tree" style="left:29px;top:197.0px">Composite assemblies</div>
<div class="tree" style="left:29px;top:214.2px">Delay elements</div>
<div class="tree" style="left:29px;top:231.3px">Electrical circuits</div>
<div class="tree" style="left:29px;top:248.5px">Electron tubes</div>
<div class="tree" style="left:29px;top:265.7px">IGFET</div>
<div class="tree" style="left:29px;top:282.9px">Inductors</div>
<div class="tree" style="left:29px;top:300.0px">Integrated circuit</div>
<!-- section headers -->
<div class="hdr" style="top:310px"><span>Electrical circuits</span><svg class="xb" style="background:none" width="10" height="10" viewBox="0 0 10 10"><circle cx="5" cy="5" r="4.8" fill="#747474"/><path d="M3 3L7 7M7 3L3 7" stroke="#e4e4e4" stroke-width="0.9"/></svg></div>
<div class="hdr" style="top:326px"><span style="letter-spacing:-0.2px">Lamps, acoustics, mea...</span><svg class="xb" style="background:none" width="10" height="10" viewBox="0 0 10 10"><circle cx="5" cy="5" r="4.8" fill="#747474"/><path d="M3 3L7 7M7 3L3 7" stroke="#e4e4e4" stroke-width="0.9"/></svg></div>
<div class="hdr" style="top:341px"><span>Resistors</span><svg class="xb" style="background:none" width="10" height="10" viewBox="0 0 10 10"><circle cx="5" cy="5" r="4.8" fill="#747474"/><path d="M3 3L7 7M7 3L3 7" stroke="#e4e4e4" stroke-width="0.9"/></svg></div>
<div class="hdr" style="top:357px;height:17px;border-bottom:1px solid #a0a0a0;background:linear-gradient(#84b6ee,#9ccaf4 45%,#b6e2fb 55%,#c6f0fd)"><span style="top:0.7px">Transistors</span><svg class="xb" style="background:none" width="10" height="10" viewBox="0 0 10 10"><circle cx="5" cy="5" r="4.8" fill="#747474"/><path d="M3 3L7 7M7 3L3 7" stroke="#e4e4e4" stroke-width="0.9"/></svg></div>
<div class="a" style="left:0;top:374px;width:198px;height:239px;overflow:hidden"><div class="item" style="top:2px"><svg class="a" style="left:-0.8px;top:-1.2px" width="27" height="27" viewBox="0 0 27 27"><circle cx="12.9" cy="13.2" r="10.1" fill="none" stroke="#333" stroke-width="1"/><path d="M1.2 13.5H9.5M9.5 7.6V18.8M9.5 10.8L18.5 5.6V1.2M9.5 16.2L18.5 21.2V25.5" fill="none" stroke="#222" stroke-width="1.1"/><path d="M10.8 17L15.2 17.2 13.2 20.4z" fill="#111"/></svg></div><div class="il" style="top:11px;color:#111">BJT, PNP, env</div><div class="item" style="top:33px"><svg class="a" style="left:-0.8px;top:-1.2px" width="27" height="27" viewBox="0 0 27 27"><path d="M1.2 13.5H9.5M9.5 7.6V18.8M9.5 10.8L18.5 5.6V1.2M9.5 16.2L18.5 21.2V25.5" fill="none" stroke="#222" stroke-width="1.1"/><path d="M10.8 17L15.2 17.2 13.2 20.4z" fill="#111"/></svg></div><div class="il" style="top:42px;color:#111">BJT, PNP</div><div class="a" style="left:9.5px;top:61px;width:32px;height:33px;border-radius:4px;background:#7ab4ef"></div><div class="item" style="top:64px"><svg class="a" style="left:-0.8px;top:-1.2px" width="27" height="27" viewBox="0 0 27 27"><circle cx="12.9" cy="13.2" r="10.1" fill="none" stroke="#333" stroke-width="1"/><path d="M1.2 13.5H9.5M9.5 7.6V18.8M9.5 10.8L18.5 5.6V1.2M9.5 16.2L18.5 21.2V25.5" fill="none" stroke="#222" stroke-width="1.1"/><path d="M17.6 20.6L13.4 20.2 15.3 17.1z" fill="#111"/></svg></div><div class="il" style="top:73px;color:#1c4fa8">BJT, NPN, env</div><div class="item" style="top:95px"><svg class="a" style="left:-0.8px;top:-1.2px" width="27" height="27" viewBox="0 0 27 27"><path d="M1.2 13.5H9.5M9.5 7.6V18.8M9.5 10.8L18.5 5.6V1.2M9.5 16.2L18.5 21.2V25.5" fill="none" stroke="#222" stroke-width="1.1"/><path d="M17.6 20.6L13.4 20.2 15.3 17.1z" fill="#111"/></svg></div><div class="il" style="top:104px;color:#111">BJT, NPN</div><div class="item" style="top:126px"><svg class="a" style="left:-0.8px;top:-1.2px" width="27" height="27" viewBox="0 0 27 27"><circle cx="12.9" cy="13.2" r="10.1" fill="none" stroke="#333" stroke-width="1"/><path d="M1.2 13.5H10.5M10.5 7.8V18.6M10.5 10.5H18.5V1.2M10.5 16.5H18.5V25.5" fill="none" stroke="#222" stroke-width="1.1"/><path d="M3.6 13.5L7.8 11.2 7.8 15.8z" fill="#111"/></svg></div><div class="il" style="top:135px;color:#111">JFET, P, env</div><div class="item" style="top:157px"><svg class="a" style="left:-0.8px;top:-1.2px" width="27" height="27" viewBox="0 0 27 27"><path d="M1.2 13.5H10.5M10.5 7.8V18.6M10.5 10.5H18.5V1.2M10.5 16.5H18.5V25.5" fill="none" stroke="#222" stroke-width="1.1"/><path d="M3.6 13.5L7.8 11.2 7.8 15.8z" fill="#111"/></svg></div><div class="il" style="top:166px;color:#111">JFET, P</div><div class="item" style="top:188px"><svg class="a" style="left:-0.8px;top:-1.2px" width="27" height="27" viewBox="0 0 27 27"><circle cx="12.9" cy="13.2" r="10.1" fill="none" stroke="#333" stroke-width="1"/><path d="M1.2 13.5H10.5M10.5 7.8V18.6M10.5 10.5H18.5V1.2M10.5 16.5H18.5V25.5" fill="none" stroke="#222" stroke-width="1.1"/><path d="M9.6 13.5L5.6 11.2 5.6 15.8z" fill="#111"/></svg></div><div class="il" style="top:197px;color:#111">JFET, N, env</div><div class="item" style="top:219px"><svg class="a" style="left:-0.8px;top:-1.2px" width="27" height="27" viewBox="0 0 27 27"><path d="M1.2 13.5H10.5M10.5 7.8V18.6M10.5 10.5H18.5V1.2M10.5 16.5H18.5V25.5" fill="none" stroke="#222" stroke-width="1.1"/><path d="M9.6 13.5L5.6 11.2 5.6 15.8z" fill="#111"/></svg></div><div class="il" style="top:228px;color:#111">JFET, N</div></div>
<div class="a" id="canvas"></div>
<div class="a" id="page"></div>
<div class="a" id="vscroll"></div>
<div class="a" id="hbar"></div>

<svg class="a" style="left:0;top:0" width="1100" height="629" viewBox="0 0 1100 629">
<circle cx="369.2" cy="334.5" r="36.9" fill="none" stroke="#3d84aa" stroke-width="1.3"/>
<path d="M369.3 316V359.8" stroke="#2c7aa2" stroke-width="1.5"/><path d="M369.3 308.6L373.2 316.9H365.4z" fill="#1a6890"/>
<circle cx="913.5" cy="332.7" r="37.1" fill="none" stroke="#3d84aa" stroke-width="1.3"/>
<path d="M913.5 314.8V359.4" stroke="#2c7aa2" stroke-width="1.5"/><path d="M913.5 306.8L917.4 315.5H909.6z" fill="#1a6890"/>
<path d="M505.9 323.9H531.5M505.9 349.1H531.5" fill="none" stroke="#80d07c" stroke-width="1.3" stroke-dasharray="4.6 3.9" stroke-dashoffset="-1"/><path d="M505.9 323.9V349.1M531.5 323.9V349.1" fill="none" stroke="#80d07c" stroke-width="1.3" stroke-dasharray="4.2 3.8" stroke-dashoffset="-1.6"/>
<circle cx="518.6" cy="336" r="9.4" fill="none" stroke="#2a6f98" stroke-width="1"/>
<path d="M506.3 336.3H515.6M515.6 330.3V342.3M515.6 332.9L524.6 329.2V323.9M515.6 339.2L524.6 342.9V347.8" fill="none" stroke="#1f6890" stroke-width="1.1"/>
<path d="M524.2 342.7L519.8 342.9 521.4 339.6z" fill="#1a5f88"/>
</svg>
<!-- bottom bar -->
<div class="a" style="left:198px;top:600px;width:15px;height:13px;background:linear-gradient(to right,#f4f4f4,#d8d8d8);border-right:1.5px solid #3a3a3a"></div>
<div class="a" style="left:203.5px;top:603.5px;width:1.2px;height:6px;background:#8a8a8a"></div>
<div class="a" style="left:206.3px;top:603.5px;width:1.2px;height:6px;background:#8a8a8a"></div>
<div class="a" style="left:214px;top:600px;width:39px;height:13px;background:#f0f0f0;border-right:1px solid #e0e0e0"></div>
<div class="a" style="left:233.5px;top:600px;width:1px;height:13px;background:#e2e2e2"></div>
<svg class="a" style="left:214px;top:600px" width="40" height="13" viewBox="0 0 40 13"><path d="M7.5 6.5L11.5 3.8V9.2z" fill="#b8b8b8"/><path d="M32 6.5L28 3.8V9.2z" fill="#b8b8b8"/></svg>
<div class="a" style="left:253px;top:600.5px;width:82px;height:12.5px;background:linear-gradient(#f2f2f2,#e6e6e6);border-right:1px solid #c8c8c8"></div>
<div class="t" style="left:257.4px;top:603.2px;font-size:9.2px;color:#222">Custom 61%</div>
<svg class="a" style="left:322px;top:600px" width="12" height="13" viewBox="0 0 12 13"><path d="M3.3 5.2L6 2.8 8.7 5.2M3.3 7.8L6 10.3 8.7 7.8" fill="none" stroke="#222" stroke-width="1.1"/></svg>
<div class="a" style="left:334.7px;top:600px;width:38.7px;height:13px;background:linear-gradient(to right,#8e8e8e,#b8b8b8 20%,#a8a8a8 80%,#8a8a8a)"></div>
<div class="a" style="left:340.5px;top:601.8px;width:6.6px;height:9.4px;background:#fbfbfb;border:0.8px solid #777;border-radius:1px"></div>
<div class="a" style="left:350.5px;top:601.8px;width:6.6px;height:9.4px;background:#fbfbfb;border:0.8px solid #777;border-radius:1px"></div>
<div class="a" style="left:360.3px;top:601.8px;width:6.6px;height:9.4px;background:#fbfbfb;border:0.8px solid #777;border-radius:1px"></div>
<svg class="a" style="left:1075px;top:600px" width="25" height="13" viewBox="1075 600 25 13">
<rect x="1075.3" y="600.5" width="11.5" height="11.8" fill="#c4ccd6"/><path d="M1081 601.5l1.6 2h-3.2zM1081 611.3l1.6-2h-3.2zM1076.3 606.4l2-1.6v3.2zM1085.8 606.4l-2-1.6v3.2z" fill="#2a5ab0"/><rect x="1079.3" y="604.6" width="3.4" height="3.4" fill="#e8f2ff" stroke="#5a8ad0" stroke-width="0.6"/>
<rect x="1088" y="600.5" width="10" height="11.8" fill="#d0d6de"/><rect x="1091" y="602.8" width="4" height="7.2" fill="#fff" stroke="#6a8ac0" stroke-width="0.6"/>
</svg>
<div class="a" id="status"></div><svg class="a" style="left:0;top:622px" width="1100" height="7" viewBox="0 622 1100 7"><path d="M0 625.5Q2 627 3.5 629H0z" fill="#222"/><path d="M1100 624.5V629H1095.5z" fill="#2a2a2a"/></svg>
<div class="st" style="left:8.2px;top:614.2px;font-size:9.6px">Ready</div>
<div class="st" style="left:186px;top:615.2px;font-size:10px;letter-spacing:0.16px">W: 10,&nbsp; H: 10,&nbsp; Angle: 0.00 rad</div>
<div class="st" style="left:467px;top:615.2px;font-size:10px;letter-spacing:0.3px">M: [ 96.72, 139.22 ]</div>
</body></html>
